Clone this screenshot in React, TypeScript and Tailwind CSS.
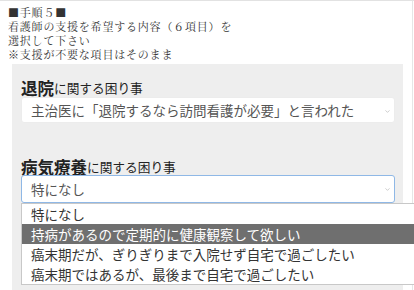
import { ChevronDown } from 'lucide-react';

const JP = { fontFamily: '"Noto Sans CJK JP", "Noto Sans", sans-serif' };
const JP_SERIF = { fontFamily: '"Noto Serif CJK JP", "Noto Sans CJK JP", serif' };

const OPTIONS = [
  '特になし',
  '持病があるので定期的に健康観察して欲しい',
  '癌末期だが、ぎりぎりまで入院せず自宅で過ごしたい',
  '癌末期ではあるが、最後まで自宅で過ごしたい',
];

function Heading({ strong }: { strong: string }) {
  return (
    <div className="h-[24px] flex items-end leading-none text-[#222]">
      <span className="text-[16.5px] font-bold">{strong}</span>
      <span className="text-[12.7px] mb-[1px]">に関する困り事</span>
    </div>
  );
}

function Select({ value, focused }: { value: string; focused?: boolean }) {
  return (
    <div
      className={`relative bg-white rounded-[3px] border flex items-center pl-[9px] text-[13.5px] text-[#555] ${
        focused ? 'h-[28px] border-[#8fb8e6]' : 'h-[26px] border-[#ececec]'
      }`}
    >
      {value}
      <ChevronDown size={7} strokeWidth={2} className="absolute right-[3px] top-[10px] text-[#aaa]" />
    </div>
  );
}

export default function App() {
  return (
    <div className="relative w-[414px] h-[290px] overflow-hidden bg-white border-t border-[#e2e2e2]" style={JP}>
      <div className="absolute right-[1px] top-0 bottom-0 w-px bg-[#e6e6e6]" />
      <div className="pl-[8px] pt-[4px] text-[11px] leading-[14px] tracking-[0.8px] text-[#333]" style={JP_SERIF}>
        <p>■手順５■</p>
        <p>看護師の支援を希望する内容（６項目）を</p>
        <p>選択して下さい</p>
        <p>※支援が不要な項目はそのまま</p>
      </div>
      <div className="relative ml-[12px] mt-[3px] w-[391px] h-[240px] bg-[#eeeeee] pt-[8px] pl-[9px] pr-[8px]">
        <Heading strong="退院" />
        <div className="mt-[1px]">
          <Select value="主治医に「退院するなら訪問看護が必要」と言われた" />
        </div>
        <div className="mt-[28px]">
          <Heading strong="病気療養" />
        </div>
        <div className="relative">
          <Select value="特になし" focused />
          <div className="absolute left-0 top-[28px] w-[420px] bg-white border border-[#c8c8c8] text-[13.5px] text-[#333]">
            {OPTIONS.map((o, i) => (
              <div
                key={o}
                className={`h-[20px] flex items-center pl-[9px] whitespace-nowrap ${
                  i === 1 ? 'bg-[#6f6f6f] text-white' : ''
                }`}
              >
                {o}
              </div>
            ))}
          </div>
        </div>
      </div>
    </div>
  );
}
